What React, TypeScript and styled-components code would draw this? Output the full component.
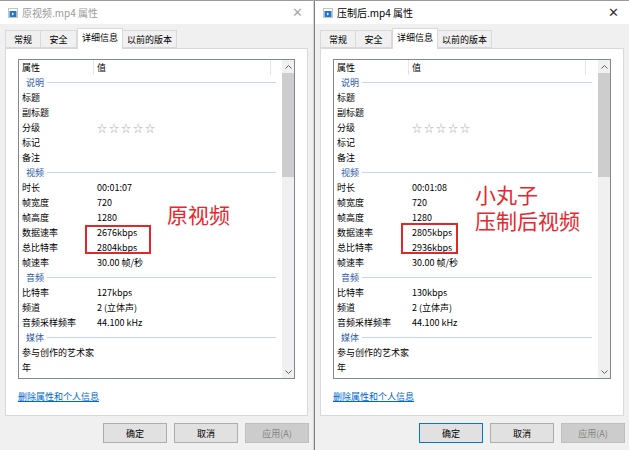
import React from 'react';
import styled, { createGlobalStyle } from 'styled-components';

const GlobalStyle = createGlobalStyle`
    html, body {
        margin: 0;
        padding: 0;
        background: #f0f0f0;
    }
    body {
        font-family: "Noto Sans CJK SC", "Noto Sans", sans-serif;
        color: #000;
    }
`;

const Desktop = styled.div`
    display: flex;
    width: 629px;
    height: 450px;
    overflow: hidden;
    background: #f0f0f0;
`;

const Window = styled.div<{ $side: 'left' | 'right' }>`
    display: flex;
    flex-direction: column;
    width: ${(p) => (p.$side === 'left' ? 313 : 314)}px;
    border-top: 1px solid #9a9a9a;
    ${(p) => (p.$side === 'left' ? 'border-right: 1px solid #d4d4d4;' : 'border-left: 1px solid #808080;')}
    background: #f0f0f0;
`;

const TitleBar = styled.div<{ $active: boolean }>`
    display: flex;
    align-items: center;
    height: 23px;
    padding: 0 8px;
    background: #fff;
    font-size: 10px;
    color: ${(p) => (p.$active ? '#000' : '#999')};
`;

const TitleText = styled.span`
    margin-left: 4px;
    flex: 1;
`;

const CloseBtn = styled.span<{ $active: boolean }>`
    font-size: 13px;
    font-family: "DejaVu Sans", sans-serif;
    font-weight: 200;
    color: ${(p) => (p.$active ? '#333' : '#aaa')};
    margin-right: 2px;
`;

const Body = styled.div`
    display: flex;
    flex-direction: column;
    padding: 4px 5px 0 5px;
`;

const TabRow = styled.div`
    display: flex;
    align-items: flex-end;
    height: 20px;
`;

const Tab = styled.div<{ $selected?: boolean }>`
    box-sizing: border-box;
    min-width: 36px;
    padding: 0 4px;
    height: ${(p) => (p.$selected ? 21 : 18)}px;
    line-height: 17px;
    text-align: center;
    font-size: 9px;
    border: 1px solid #d9d9d9;
    border-bottom: ${(p) => (p.$selected ? 'none' : '1px solid #d9d9d9')};
    border-left: ${(p) => (p.$selected ? '1px solid #d9d9d9' : 'none')};
    background: ${(p) => (p.$selected ? '#fff' : '#f0f0f0')};
    position: relative;
    z-index: ${(p) => (p.$selected ? 2 : 1)};
    margin-bottom: ${(p) => (p.$selected ? -1 : 0)}px;
    &:first-child {
        border-left: 1px solid #d9d9d9;
    }
`;

const Panel = styled.div`
    box-sizing: border-box;
    height: 368px;
    background: #fff;
    border: 1px solid #d9d9d9;
    padding: 10px 12px 0 12px;
    display: flex;
    flex-direction: column;
`;

const ListBox = styled.div`
    position: relative;
    box-sizing: border-box;
    height: 320px;
    border: 1px solid #828790;
    display: flex;
    background: #fff;
`;

const ListContent = styled.div`
    flex: 1;
    overflow: hidden;
    font-size: 9px;
`;

const HeaderRow = styled.div`
    display: grid;
    grid-template-columns: 75px 177px 1fr;
    height: 15px;
`;

const HeaderCell = styled.div`
    padding-left: 3px;
    line-height: 15px;
    border-right: 1px solid #e5e5e5;
    &:last-child {
        border-right: none;
    }
`;

const GroupRow = styled.div`
    display: flex;
    align-items: center;
    height: 15px;
    padding-left: 7px;
    padding-right: 6px;
    color: #2a5aa8;
`;

const GroupLine = styled.div`
    flex: 1;
    height: 1px;
    margin-left: 3px;
    background: #c8d4e8;
`;

const PropRow = styled.div`
    display: grid;
    grid-template-columns: 75px 1fr;
    height: 15px;
    line-height: 15px;
    white-space: nowrap;
`;

const PropName = styled.div`
    padding-left: 3px;
`;

const PropValue = styled.div`
    padding-left: 3px;
`;

const Stars = styled.span`
    font-size: 10px;
    letter-spacing: 2px;
    color: #b0b0b0;
`;

const ScrollBar = styled.div`
    width: 12px;
    display: flex;
    flex-direction: column;
    background: #f0f0f0;
`;

const ScrollArrow = styled.div`
    height: 13px;
    display: flex;
    align-items: center;
    justify-content: center;
`;

const ScrollTrack = styled.div`
    flex: 1;
`;

const ScrollThumb = styled.div`
    height: 104px;
    background: #cdcdcd;
`;

const RedBox = styled.div<{ $left: number; $top: number; $w: number; $h: number }>`
    position: absolute;
    left: ${(p) => p.$left}px;
    top: ${(p) => p.$top}px;
    width: ${(p) => p.$w}px;
    height: ${(p) => p.$h}px;
    box-sizing: border-box;
    border: 2px solid #e3262b;
`;

const Note = styled.div<{ $left: number; $top: number }>`
    position: absolute;
    left: ${(p) => p.$left}px;
    top: ${(p) => p.$top}px;
    display: flex;
    flex-direction: column;
    font-size: 21px;
    color: #e8262c;
    white-space: nowrap;
`;

const NoteLine = styled.div`
    height: 26px;
    line-height: 26px;
`;

const Link = styled.a`
    margin-top: 11px;
    font-size: 9px;
    color: #0066cc;
    text-decoration: underline;
    align-self: flex-start;
`;

const ButtonRow = styled.div`
    display: flex;
    justify-content: flex-end;
    gap: 7px;
    margin-top: 7px;
    margin-right: -1px;
`;

const Button = styled.div<{ $disabled?: boolean; $default?: boolean }>`
    box-sizing: border-box;
    width: 64px;
    height: 20px;
    display: flex;
    align-items: center;
    justify-content: center;
    font-size: 9px;
    background: ${(p) => (p.$disabled ? '#cccccc' : '#e1e1e1')};
    color: ${(p) => (p.$disabled ? '#838383' : '#000')};
    border: 1px solid ${(p) => (p.$disabled ? '#bfbfbf' : p.$default ? '#0078d7' : '#adadad')};
`;

type Row =
    | { kind: 'group'; label: string }
    | { kind: 'prop'; name: string; value?: string; stars?: boolean };

const FileIcon = () => (
    <svg width="10" height="10" viewBox="0 0 10 10">
        <rect x="0.5" y="0.5" width="9" height="9" fill="#fff" stroke="#c4c4c4" />
        <rect x="1.5" y="3" width="7" height="6" fill="#1e78d2" />
        <path d="M4 4.6 L6.2 6 L4 7.4 Z" fill="#fff" />
    </svg>
);

const Chevron = ({ up }: { up: boolean }) => (
    <svg width="7" height="4" viewBox="0 0 7 4">
        <polyline
            points={up ? '0.5,3.5 3.5,0.5 6.5,3.5' : '0.5,0.5 3.5,3.5 6.5,0.5'}
            fill="none"
            stroke="#606060"
            strokeWidth="1"
        />
    </svg>
);

interface Info {
    title: string;
    active: boolean;
    duration: string;
    dataRate: string;
    totalRate: string;
    audioRate: string;
}

const buildRows = (info: Info): Row[] => [
    { kind: 'group', label: '说明' },
    { kind: 'prop', name: '标题' },
    { kind: 'prop', name: '副标题' },
    { kind: 'prop', name: '分级', stars: true },
    { kind: 'prop', name: '标记' },
    { kind: 'prop', name: '备注' },
    { kind: 'group', label: '视频' },
    { kind: 'prop', name: '时长', value: info.duration },
    { kind: 'prop', name: '帧宽度', value: '720' },
    { kind: 'prop', name: '帧高度', value: '1280' },
    { kind: 'prop', name: '数据速率', value: info.dataRate },
    { kind: 'prop', name: '总比特率', value: info.totalRate },
    { kind: 'prop', name: '帧速率', value: '30.00 帧/秒' },
    { kind: 'group', label: '音频' },
    { kind: 'prop', name: '比特率', value: info.audioRate },
    { kind: 'prop', name: '频道', value: '2 (立体声)' },
    { kind: 'prop', name: '音频采样频率', value: '44.100 kHz' },
    { kind: 'group', label: '媒体' },
    { kind: 'prop', name: '参与创作的艺术家' },
    { kind: 'prop', name: '年' },
    { kind: 'prop', name: '流派' },
];

const PropertiesWindow = ({ info, side, children }: { info: Info; side: 'left' | 'right'; children?: React.ReactNode }) => {
    const rows = buildRows(info);
    return (
        <Window $side={side}>
            <TitleBar $active={info.active}>
                <FileIcon />
                <TitleText>{info.title}</TitleText>
                <CloseBtn $active={info.active}>✕</CloseBtn>
            </TitleBar>
            <Body>
                <TabRow>
                    <Tab>常规</Tab>
                    <Tab>安全</Tab>
                    <Tab $selected>详细信息</Tab>
                    <Tab>以前的版本</Tab>
                </TabRow>
                <Panel>
                    <ListBox>
                        <ListContent>
                            <HeaderRow>
                                <HeaderCell>属性</HeaderCell>
                                <HeaderCell>值</HeaderCell>
                                <HeaderCell />
                            </HeaderRow>
                            {rows.map((row, i) =>
                                row.kind === 'group' ? (
                                    <GroupRow key={i}>
                                        {row.label}
                                        <GroupLine />
                                    </GroupRow>
                                ) : (
                                    <PropRow key={i}>
                                        <PropName>{row.name}</PropName>
                                        <PropValue>
                                            {row.stars ? <Stars>☆☆☆☆☆</Stars> : row.value}
                                        </PropValue>
                                    </PropRow>
                                )
                            )}
                        </ListContent>
                        <ScrollBar>
                            <ScrollArrow>
                                <Chevron up />
                            </ScrollArrow>
                            <ScrollThumb />
                            <ScrollTrack />
                            <ScrollArrow>
                                <Chevron up={false} />
                            </ScrollArrow>
                        </ScrollBar>
                        {children}
                    </ListBox>
                    <Link>删除属性和个人信息</Link>
                </Panel>
                <ButtonRow>
                    <Button $default={info.active}>确定</Button>
                    <Button>取消</Button>
                    <Button $disabled>应用(A)</Button>
                </ButtonRow>
            </Body>
        </Window>
    );
};

const original: Info = {
    title: '原视频.mp4 属性',
    active: false,
    duration: '00:01:07',
    dataRate: '2676kbps',
    totalRate: '2804kbps',
    audioRate: '127kbps',
};

const compressed: Info = {
    title: '压制后.mp4 属性',
    active: true,
    duration: '00:01:08',
    dataRate: '2805kbps',
    totalRate: '2936kbps',
    audioRate: '130kbps',
};

const App = () => {
    return (
        <>
            <GlobalStyle />
            <Desktop>
                <PropertiesWindow info={original} side="left">
                    <RedBox $left={66} $top={165} $w={66} $h={29} />
                    <Note $left={148} $top={141}>
                        <NoteLine>原视频</NoteLine>
                    </Note>
                </PropertiesWindow>
                <PropertiesWindow info={compressed} side="right">
                    <RedBox $left={67} $top={163} $w={57} $h={31} />
                    <Note $left={141} $top={121}>
                        <NoteLine>小丸子</NoteLine>
                        <NoteLine>压制后视频</NoteLine>
                    </Note>
                </PropertiesWindow>
            </Desktop>
        </>
    );
};

export default App;
